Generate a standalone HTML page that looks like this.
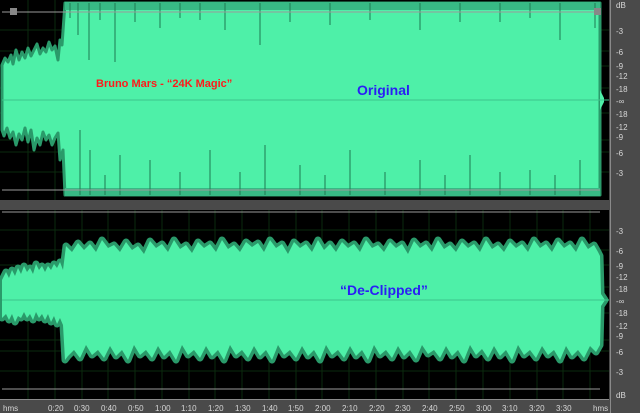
<!DOCTYPE html>
<html><head><meta charset="utf-8"><style>
body{margin:0;width:640px;height:413px;overflow:hidden;background:#4a4a4a;font-family:"Liberation Sans",sans-serif}
svg{display:block}
</style></head><body>
<svg width="640" height="413" viewBox="0 0 640 413" xmlns="http://www.w3.org/2000/svg">
<defs>
<polygon id="bw" points="2,280 6,272 9,278 12,270 15,276 18,268 21,274 24,266 27,272 30,268 33,274 36,264 39,270 42,266 45,272 48,266 51,270 54,264 57,268 60,262 63,270 66,246 72,252 78,243 84,250 90,244 96,252 102,240 108,248 114,245 120,252 126,242 132,250 138,246 144,254 150,241 156,248 162,244 168,252 174,240 180,249 186,245 192,253 198,242 204,248 210,244 216,252 222,240 228,249 234,245 240,252 246,242 252,247 258,243 264,252 270,240 276,248 282,244 288,254 294,242 300,248 306,244 312,252 318,240 324,250 330,244 336,252 342,242 348,248 354,244 360,252 366,240 372,248 378,245 384,252 390,242 396,248 402,244 408,254 414,241 420,248 426,244 432,252 438,240 444,249 450,245 456,252 462,242 468,248 474,244 480,252 486,240 492,249 498,245 504,252 510,242 516,248 522,244 528,252 534,240 540,248 546,244 552,252 558,241 564,248 570,244 576,252 582,240 588,249 594,245 598,252 600,256 601,294 605,300 601,306 600,345 596,352 590,346 584,358 578,350 572,356 566,346 560,360 554,350 548,355 542,346 536,358 530,350 524,355 518,345 512,360 506,350 500,356 494,346 488,358 482,349 476,355 470,345 464,360 458,350 452,356 446,346 440,358 434,350 428,354 422,345 416,359 410,350 404,356 398,346 392,358 386,350 380,355 374,345 368,360 362,350 356,356 350,346 344,358 338,350 332,355 326,345 320,360 314,350 308,356 302,346 296,358 290,350 284,355 278,345 272,360 266,350 260,356 254,346 248,358 242,350 236,355 230,345 224,360 218,350 212,356 206,346 200,358 194,350 188,355 182,345 176,360 170,350 164,356 158,346 152,358 146,350 140,355 134,345 128,360 122,350 116,356 110,346 104,358 98,350 92,355 86,345 80,358 74,350 68,356 65,360 63,325 60,318 57,324 54,316 51,322 48,314 45,320 42,314 39,318 36,312 33,320 30,314 27,318 24,312 21,318 18,316 15,322 12,314 9,320 6,314 2,318"/>
</defs>
<rect x="0" y="0" width="640" height="413" fill="#4a4a4a"/>
<rect x="0" y="0" width="609" height="200" fill="#000"/>
<rect x="0" y="210" width="609" height="189" fill="#000"/>
<g stroke="#0a2a0e" stroke-width="1">
<line x1="28" y1="0" x2="28" y2="200"/><line x1="55" y1="0" x2="55" y2="200"/>
<line x1="28" y1="210" x2="28" y2="399"/><line x1="55" y1="210" x2="55" y2="399"/><line x1="82" y1="210" x2="82" y2="399"/><line x1="108" y1="210" x2="108" y2="399"/><line x1="135" y1="210" x2="135" y2="399"/><line x1="162" y1="210" x2="162" y2="399"/><line x1="189" y1="210" x2="189" y2="399"/><line x1="215" y1="210" x2="215" y2="399"/><line x1="242" y1="210" x2="242" y2="399"/><line x1="269" y1="210" x2="269" y2="399"/><line x1="296" y1="210" x2="296" y2="399"/><line x1="322" y1="210" x2="322" y2="399"/><line x1="349" y1="210" x2="349" y2="399"/><line x1="376" y1="210" x2="376" y2="399"/><line x1="403" y1="210" x2="403" y2="399"/><line x1="429" y1="210" x2="429" y2="399"/><line x1="456" y1="210" x2="456" y2="399"/><line x1="483" y1="210" x2="483" y2="399"/><line x1="510" y1="210" x2="510" y2="399"/><line x1="537" y1="210" x2="537" y2="399"/><line x1="563" y1="210" x2="563" y2="399"/><line x1="590" y1="210" x2="590" y2="399"/>
<line x1="0" y1="30" x2="609" y2="30"/><line x1="0" y1="51" x2="609" y2="51"/><line x1="0" y1="66" x2="609" y2="66"/><line x1="0" y1="88" x2="609" y2="88"/><line x1="0" y1="113" x2="609" y2="113"/><line x1="0" y1="140" x2="609" y2="140"/><line x1="0" y1="152" x2="609" y2="152"/><line x1="0" y1="172" x2="609" y2="172"/>
<line x1="0" y1="230" x2="609" y2="230"/><line x1="0" y1="250" x2="609" y2="250"/><line x1="0" y1="265" x2="609" y2="265"/><line x1="0" y1="287" x2="609" y2="287"/><line x1="0" y1="313" x2="609" y2="313"/><line x1="0" y1="340" x2="609" y2="340"/><line x1="0" y1="351" x2="609" y2="351"/><line x1="0" y1="371" x2="609" y2="371"/>
</g>
<!-- top panel waveform -->
<polygon fill="#4ef0a8" stroke="#2a9a6a" stroke-width="3" stroke-linejoin="round" points="2,65 5,58 8,62 11,55 13,64 16,50 19,60 22,52 25,58 28,48 31,56 34,50 37,44 40,54 43,48 46,52 49,42 52,50 55,46 58,60 60,40 62,45 65,3 600,3 600,195 65,195 63,150 60,160 58,133 55,138 52,145 49,135 46,140 43,132 40,145 37,138 34,150 31,130 28,142 25,128 22,140 19,134 16,145 13,132 10,138 7,128 4,136 2,130"/>
<rect x="65" y="2" width="535" height="8" fill="#38b985"/>
<rect x="65" y="188" width="535" height="8" fill="#38b985"/>
<g stroke="#1f7a52" stroke-width="1">
<line x1="70" y1="3" x2="70" y2="18"/><line x1="78" y1="3" x2="78" y2="35"/><line x1="89" y1="3" x2="89" y2="60"/><line x1="100" y1="3" x2="100" y2="20"/><line x1="115" y1="3" x2="115" y2="62"/><line x1="135" y1="3" x2="135" y2="22"/><line x1="160" y1="3" x2="160" y2="28"/><line x1="180" y1="3" x2="180" y2="18"/><line x1="200" y1="3" x2="200" y2="20"/><line x1="225" y1="3" x2="225" y2="30"/><line x1="260" y1="3" x2="260" y2="45"/><line x1="290" y1="3" x2="290" y2="22"/><line x1="330" y1="3" x2="330" y2="25"/><line x1="370" y1="3" x2="370" y2="20"/><line x1="420" y1="3" x2="420" y2="30"/><line x1="460" y1="3" x2="460" y2="22"/><line x1="500" y1="3" x2="500" y2="22"/><line x1="530" y1="3" x2="530" y2="18"/><line x1="560" y1="3" x2="560" y2="40"/><line x1="595" y1="3" x2="595" y2="28"/>
<line x1="80" y1="195" x2="80" y2="130"/><line x1="90" y1="195" x2="90" y2="150"/><line x1="105" y1="195" x2="105" y2="175"/><line x1="120" y1="195" x2="120" y2="155"/><line x1="150" y1="195" x2="150" y2="160"/><line x1="180" y1="195" x2="180" y2="172"/><line x1="210" y1="195" x2="210" y2="150"/><line x1="240" y1="195" x2="240" y2="172"/><line x1="265" y1="195" x2="265" y2="145"/><line x1="300" y1="195" x2="300" y2="165"/><line x1="325" y1="195" x2="325" y2="175"/><line x1="350" y1="195" x2="350" y2="150"/><line x1="385" y1="195" x2="385" y2="172"/><line x1="420" y1="195" x2="420" y2="160"/><line x1="445" y1="195" x2="445" y2="175"/><line x1="470" y1="195" x2="470" y2="155"/><line x1="500" y1="195" x2="500" y2="172"/><line x1="530" y1="195" x2="530" y2="170"/><line x1="555" y1="195" x2="555" y2="175"/><line x1="580" y1="195" x2="580" y2="160"/>
</g>
<line x1="2" y1="12" x2="600" y2="12" stroke="#9a9a9a"/>
<line x1="2" y1="190" x2="600" y2="190" stroke="#9a9a9a"/>
<polygon fill="#4ef0a8" points="600,90 604,98 604,102 600,110"/>
<line x1="2" y1="100" x2="609" y2="100" stroke="#3cc58b"/>
<rect x="10" y="8" width="7" height="7" fill="#888"/>
<rect x="594" y="8" width="7" height="7" fill="#888"/>
<!-- bottom panel waveform -->
<use href="#bw" fill="none" stroke="#2a9a6a" stroke-width="7" stroke-linejoin="round"/>
<use href="#bw" fill="#4ef0a8"/>
<line x1="2" y1="212" x2="600" y2="212" stroke="#9a9a9a"/>
<line x1="2" y1="389" x2="600" y2="389" stroke="#9a9a9a"/>
<line x1="2" y1="300" x2="609" y2="300" stroke="#3cc58b"/>
<!-- right dB ruler -->
<line x1="610.5" y1="0" x2="610.5" y2="413" stroke="#8a8a8a"/>
<g fill="#d8d8d8" font-size="8" font-family="Liberation Sans,sans-serif">
<text x="616" y="8">dB</text>
<text x="616" y="34">-3</text><text x="616" y="55">-6</text><text x="616" y="69">-9</text><text x="616" y="79">-12</text><text x="616" y="92">-18</text><text x="616" y="104">-∞</text><text x="616" y="117">-18</text><text x="616" y="130">-12</text><text x="616" y="140">-9</text><text x="616" y="156">-6</text><text x="616" y="176">-3</text>
<text x="616" y="234">-3</text><text x="616" y="254">-6</text><text x="616" y="269">-9</text><text x="616" y="280">-12</text><text x="616" y="292">-18</text><text x="616" y="304">-∞</text><text x="616" y="316">-18</text><text x="616" y="329">-12</text><text x="616" y="339">-9</text><text x="616" y="355">-6</text><text x="616" y="375">-3</text>
<text x="616" y="398">dB</text>
</g>
<!-- time ruler -->
<g fill="#d8d8d8" font-size="8" font-family="Liberation Sans,sans-serif">
<text x="3" y="411">hms</text>
<text x="48" y="411">0:20</text><text x="74" y="411">0:30</text><text x="101" y="411">0:40</text><text x="128" y="411">0:50</text><text x="155" y="411">1:00</text><text x="181" y="411">1:10</text><text x="208" y="411">1:20</text><text x="235" y="411">1:30</text><text x="262" y="411">1:40</text><text x="288" y="411">1:50</text><text x="315" y="411">2:00</text><text x="342" y="411">2:10</text><text x="369" y="411">2:20</text><text x="395" y="411">2:30</text><text x="422" y="411">2:40</text><text x="449" y="411">2:50</text><text x="476" y="411">3:00</text><text x="502" y="411">3:10</text><text x="529" y="411">3:20</text><text x="556" y="411">3:30</text><text x="593" y="411">hms</text>
</g>
<line x1="0" y1="399.5" x2="609" y2="399.5" stroke="#8a8a8a"/>
<text x="96" y="87" fill="#ff1a1a" font-size="11" font-weight="bold" font-family="Liberation Sans,sans-serif">Bruno Mars - “24K Magic”</text>
<text x="357" y="95" fill="#2a1ef5" font-size="14" font-weight="bold" font-family="Liberation Sans,sans-serif">Original</text>
<text x="340" y="295" fill="#2a1ef5" font-size="14" font-weight="bold" font-family="Liberation Sans,sans-serif">“De-Clipped”</text>
</svg>
</body></html>
